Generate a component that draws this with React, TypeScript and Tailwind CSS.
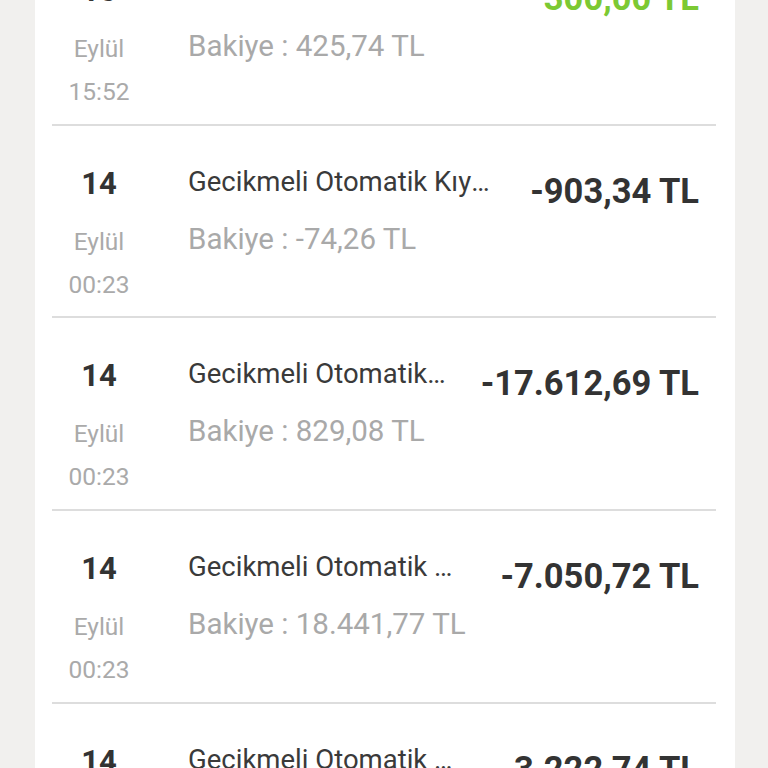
import React from 'react';

type Tx = { day: string; month: string; time: string; title: string; balance: string; amount: string; credit?: boolean };

const txs: Tx[] = [
  { day: "15", month: "Eylül", time: "15:52", title: "Para Transferi", balance: "425,74 TL", amount: "300,00 TL", credit: true },
  { day: "14", month: "Eylül", time: "00:23", title: "Gecikmeli Otomatik Kıymet Alımı", balance: "-74,26 TL", amount: "-903,34 TL" },
  { day: "14", month: "Eylül", time: "00:23", title: "Gecikmeli Otomatik Kıymet Alımı", balance: "829,08 TL", amount: "-17.612,69 TL" },
  { day: "14", month: "Eylül", time: "00:23", title: "Gecikmeli Otomatik Kıymet Alımı", balance: "18.441,77 TL", amount: "-7.050,72 TL" },
  { day: "14", month: "Eylül", time: "00:23", title: "Gecikmeli Otomatik Kıymet Alımı", balance: "11.391,05 TL", amount: "-3.222,74 TL" },
];

export default function App() {
  return (
    <div className="bg-[#f1f0ee] h-[768px] overflow-hidden font-['Roboto',sans-serif]">
      <div className="ml-[35px] w-[700px] h-full bg-white overflow-hidden">
        <div className="-mt-[67px]">
          {txs.map((tx, i) => (
            <div key={i} className="ml-[17px] mr-[19px] h-[192.7px] border-b-2 border-[#dddddd] flex">
              {/* tarih */}
              <div className="w-[94px] shrink-0 flex flex-col items-center">
                <div className="mt-[36px] leading-[44px] text-[31px] font-bold text-[#333333]">{tx.day}</div>
                <div className="mt-[14px] leading-[43px] text-[24.5px] text-[#aaaaaa]">{tx.month}</div>
                <div className="leading-[43px] text-[24.5px] text-[#aaaaaa]">{tx.time}</div>
              </div>

              {/* açıklama */}
              <div className="flex-1 min-w-0 ml-[42px] mr-[32px]">
                <div className="mt-[36px] leading-[40px] text-[27.5px] text-[#3a3a3a] truncate">{tx.title}</div>
                <div className="mt-[17px] leading-[40px] text-[29.5px] text-[#a9a9a9] whitespace-nowrap">Bakiye : {tx.balance}</div>
              </div>

              {/* tutar */}
              <div
                className={
                  tx.credit
                    ? "mt-[43px] mr-[17px] leading-[44px] text-[34.5px] font-bold whitespace-nowrap text-[#7cc933]"
                    : "mt-[43px] mr-[17px] leading-[44px] text-[34.5px] font-bold whitespace-nowrap text-[#333333]"
                }
              >
                {tx.amount}
              </div>
            </div>
          ))}
        </div>
      </div>
    </div>
  );
}
